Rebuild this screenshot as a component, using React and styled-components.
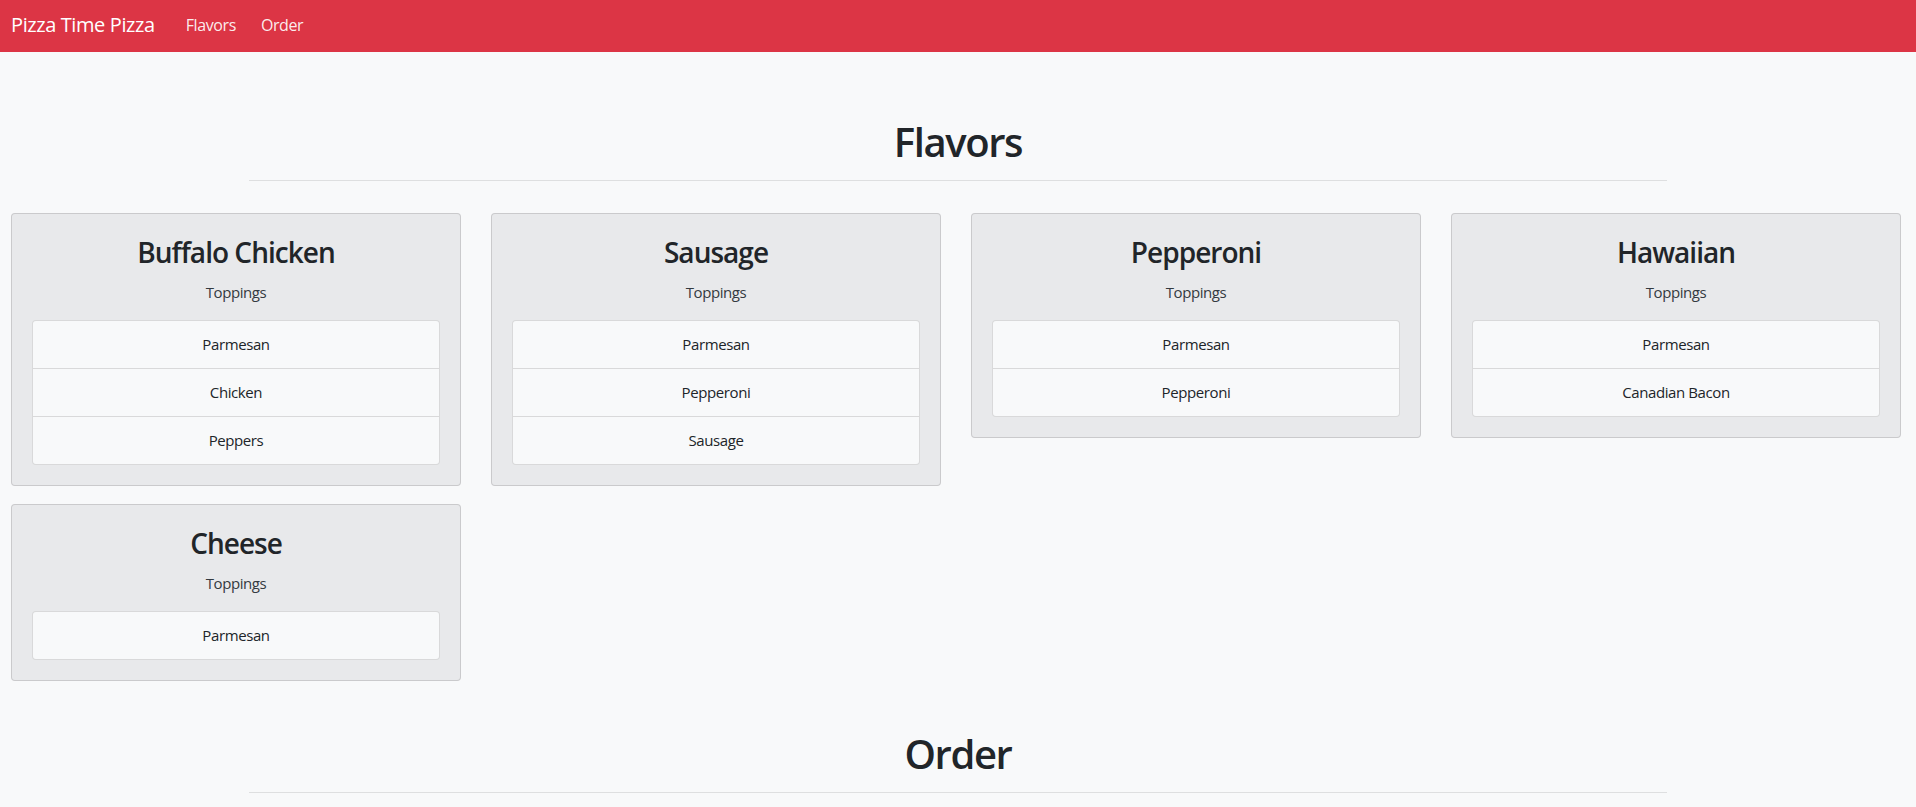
import React from 'react';
import styled, { createGlobalStyle } from 'styled-components';

const GlobalStyle = createGlobalStyle`
  html,
  body {
    margin: 0;
    background-color: #f8f9fa;
  }
  body {
    font-family: 'Segoe UI', 'Open Sans', 'Noto Sans', sans-serif;
    color: #212529;
    letter-spacing: -0.025em;
  }
  * {
    box-sizing: border-box;
  }
`;

const Navbar = styled.nav`
  display: flex;
  align-items: center;
  height: 52px;
  padding: 0 16px 3px 11px;
  background-color: #dc3545;
`;

const Brand = styled.a`
  margin-right: 31px;
  color: #fff;
  font-size: 20px;
  line-height: 30px;
  text-decoration: none;
`;

const NavLinks = styled.ul`
  display: flex;
  gap: 25px;
  margin: 0;
  padding: 0;
  list-style: none;
  a {
    color: rgba(255, 255, 255, 0.92);
    font-size: 16px;
    line-height: 24px;
    text-decoration: none;
  }
`;

const Main = styled.main`
  padding-top: 17px;
`;

const Section = styled.section`
  padding-top: 47px;
  text-align: center;
`;

const SectionTitle = styled.h1`
  margin: 0;
  padding-top: 2px;
  font-size: 40px;
  font-weight: 600;
  line-height: 1.2;
  letter-spacing: -0.035em;
`;

const Divider = styled.hr`
  width: 1418px;
  margin: 14px auto 0;
  border: 0;
  border-top: 1px solid rgba(0, 0, 0, 0.1);
`;

const CardGrid = styled.div`
  display: grid;
  grid-template-columns: repeat(4, 1fr);
  align-items: start;
  column-gap: 30px;
  row-gap: 18px;
  margin-top: 32px;
  padding: 0 15px 0 11px;
`;

const Card = styled.article`
  padding: 20px;
  background-color: #e8e9eb;
  border: 1px solid rgba(0, 0, 0, 0.13);
  border-radius: 4px;
`;

const CardTitle = styled.h3`
  margin: 0 0 10px;
  padding-top: 2px;
  font-size: 28px;
  font-weight: 600;
  line-height: 1.2;
  letter-spacing: -0.035em;
`;

const CardSubtitle = styled.p`
  margin: 0 0 16px;
  color: #343a40;
  font-size: 15px;
  line-height: 24px;
`;

const ToppingList = styled.ul`
  margin: 0;
  padding: 0;
  list-style: none;
  background-color: #f8f9fa;
  border: 1px solid rgba(0, 0, 0, 0.125);
  border-radius: 4px;
  overflow: hidden;
`;

const Topping = styled.li`
  padding: 12px 20px;
  font-size: 15px;
  line-height: 23.3px;
  & + & {
    border-top: 1px solid rgba(0, 0, 0, 0.125);
  }
`;

const flavors = [
  { name: 'Buffalo Chicken', toppings: ['Parmesan', 'Chicken', 'Peppers'] },
  { name: 'Sausage', toppings: ['Parmesan', 'Pepperoni', 'Sausage'] },
  { name: 'Pepperoni', toppings: ['Parmesan', 'Pepperoni'] },
  { name: 'Hawaiian', toppings: ['Parmesan', 'Canadian Bacon'] },
  { name: 'Cheese', toppings: ['Parmesan'] },
];

function FlavorCard({ flavor }) {
  return (
    <Card>
      <CardTitle>{flavor.name}</CardTitle>
      <CardSubtitle>Toppings</CardSubtitle>
      <ToppingList>
        {flavor.toppings.map(t => (
          <Topping key={t}>{t}</Topping>
        ))}
      </ToppingList>
    </Card>
  );
}

function App() {
  return (
    <>
      <GlobalStyle />
      <Navbar>
        <Brand href="#">Pizza Time Pizza</Brand>
        <NavLinks>
          <li>
            <a href="#flavors">Flavors</a>
          </li>
          <li>
            <a href="#order">Order</a>
          </li>
        </NavLinks>
      </Navbar>
      <Main>
        <Section id="flavors">
          <SectionTitle>Flavors</SectionTitle>
          <Divider />
          <CardGrid>
            {flavors.map(f => (
              <FlavorCard key={f.name} flavor={f} />
            ))}
          </CardGrid>
        </Section>
        <Section id="order">
          <SectionTitle>Order</SectionTitle>
          <Divider />
        </Section>
      </Main>
    </>
  );
}

export default App;
